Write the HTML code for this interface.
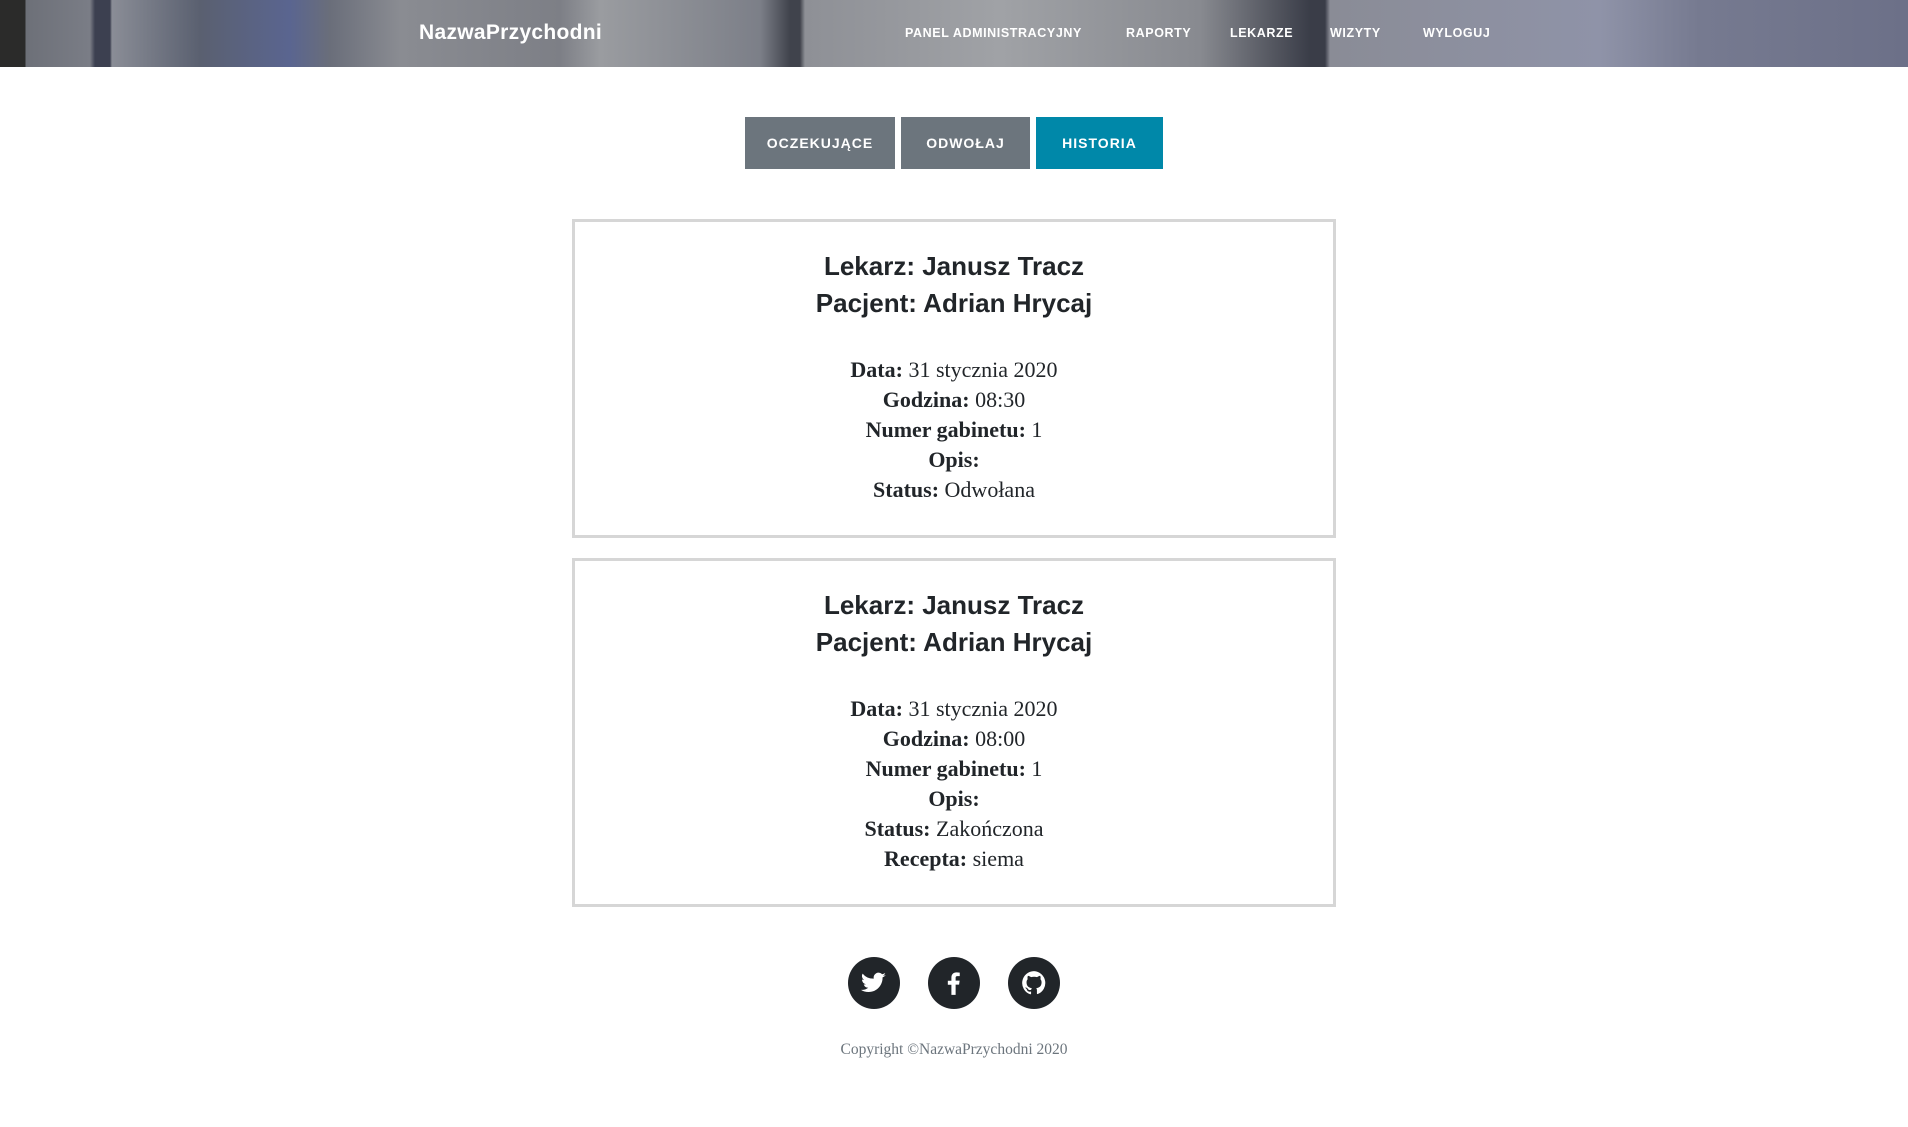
<!DOCTYPE html>
<html><head><meta charset="utf-8"><style>
*{box-sizing:border-box;margin:0;padding:0}
body{width:1908px;height:1127px;background:#fff;font-family:"Liberation Sans",sans-serif;color:#212529;position:relative;overflow:hidden}
.hdr{position:absolute;left:0;top:0;width:1908px;height:67px;background:linear-gradient(90deg,#2b2b2a 0,#2b2b2a 25px,#6d7078 26px,#7a7d86 90px,#3c4050 95px,#3c4050 110px,#8a8d96 112px,#5a6070 200px,#5a6590 290px,#6a6e7a 330px,#8a8c92 400px,#7d7f86 560px,#9a9ca0 600px,#7c7f88 760px,#40434c 790px,#40434c 800px,#8e9096 805px,#a0a2a6 1000px,#888a90 1200px,#3a3d48 1310px,#3a3d48 1325px,#8a8c96 1330px,#8f93a8 1600px,#767a90 1700px,#6c7088 1908px)}
.brand{position:absolute;left:419px;top:21px;font-size:21px;font-weight:bold;color:#fff;letter-spacing:0.3px}
.nav{position:absolute;top:26px;font-size:12.5px;font-weight:bold;color:#fff;letter-spacing:0.6px}
.btn{position:absolute;top:117px;height:52px;line-height:52px;text-align:center;color:#fff;font-weight:bold;font-size:14px;letter-spacing:1px}
.card{position:absolute;left:572px;width:764px;border:3px solid #d6d6d6;text-align:center}
.h{font-size:26px;font-weight:bold;line-height:37px}
.b{font-family:"Liberation Serif",serif;font-size:22px;line-height:30px}
.circ{position:absolute;top:957px;width:52px;height:52px;border-radius:50%;background:#212529}
.circ svg{position:absolute;left:13px;top:13px}
</style></head><body>
<div class="hdr"></div>
<div class="brand">NazwaPrzychodni</div>
<div class="nav" style="left:905px">PANEL ADMINISTRACYJNY</div>
<div class="nav" style="left:1126px">RAPORTY</div>
<div class="nav" style="left:1230px">LEKARZE</div>
<div class="nav" style="left:1330px">WIZYTY</div>
<div class="nav" style="left:1423px">WYLOGUJ</div>
<div class="btn" style="left:745px;width:150px;background:#6c757d">OCZEKUJĄCE</div>
<div class="btn" style="left:901px;width:129px;background:#6c757d">ODWOŁAJ</div>
<div class="btn" style="left:1036px;width:127px;background:#0088a9">HISTORIA</div>
<div class="card" style="top:219px;height:319px;padding-top:26px">
<div class="h">Lekarz: Janusz Tracz</div><div class="h">Pacjent: Adrian Hrycaj</div>
<div class="b" style="margin-top:33px"><b>Data:</b> 31 stycznia 2020<br><b>Godzina:</b> 08:30<br><b>Numer gabinetu:</b> 1<br><b>Opis:</b><br><b>Status:</b> Odwołana</div>
</div>
<div class="card" style="top:558px;height:349px;padding-top:26px">
<div class="h">Lekarz: Janusz Tracz</div><div class="h">Pacjent: Adrian Hrycaj</div>
<div class="b" style="margin-top:33px"><b>Data:</b> 31 stycznia 2020<br><b>Godzina:</b> 08:00<br><b>Numer gabinetu:</b> 1<br><b>Opis:</b><br><b>Status:</b> Zakończona<br><b>Recepta:</b> siema</div>
</div>
<div class="circ" style="left:848px"><svg width="26" height="26" viewBox="0 0 24 24"><path fill="#fff" d="M23 4.6a9 9 0 0 1-2.6.7 4.5 4.5 0 0 0 2-2.5 9 9 0 0 1-2.9 1.1 4.5 4.5 0 0 0-7.7 4.1A12.8 12.8 0 0 1 1.500 3.3a4.5 4.5 0 0 0 1.4 6 4.4 4.4 0 0 1-2-.6v.1a4.5 4.5 0 0 0 3.6 4.4 4.5 4.5 0 0 1-2 .1 4.5 4.5 0 0 0 4.2 3.1A9 9 0 0 1 0 18.3 12.8 12.8 0 0 0 7 20.3c8.3 0 12.9-6.9 12.9-12.9v-.6A9 9 0 0 0 23 4.6z"/></svg></div>
<div class="circ" style="left:928px"><svg width="26" height="26" viewBox="0 0 24 24"><path fill="#fff" d="M13.5 23v-9.5h3.2l.5-3.7h-3.7V7.5c0-1.100.3-1.800 1.800-1.800h2V2.4a26 26 0 0 0-2.900-.2c-2.900 0-4.800 1.700-4.800 5v2.700H6.300v3.700h3.300V23z"/></svg></div>
<div class="circ" style="left:1008px"><svg width="26" height="26" viewBox="0 0 24 24"><path fill="#fff" d="M12 1a11 11 0 0 0-3.5 21.4c.6.1.8-.2.8-.5v-2c-3.1.7-3.7-1.4-3.7-1.4-.5-1.3-1.2-1.6-1.2-1.6-1-.7.1-.7.1-.7 1.1.1 1.7 1.1 1.7 1.1 1 1.7 2.6 1.2 3.2.9.1-.7.4-1.2.7-1.5-2.4-.3-5-1.2-5-5.4 0-1.2.4-2.2 1.1-2.9-.1-.3-.5-1.4.1-2.9 0 0 .9-.3 3 1.1a10.5 10.5 0 0 1 5.5 0c2.1-1.4 3-1.1 3-1.1.6 1.5.2 2.6.1 2.9.7.8 1.1 1.7 1.1 2.9 0 4.2-2.6 5.1-5 5.4.4.3.7 1 .7 2v3c0 .3.2.6.8.5A11 11 0 0 0 12 1z"/></svg></div>
<div style="position:absolute;left:0;width:1908px;top:1041px;text-align:center;font-family:'Liberation Serif',serif;font-size:15.5px;color:#6c757d">Copyright ©NazwaPrzychodni 2020</div>
</body></html>
